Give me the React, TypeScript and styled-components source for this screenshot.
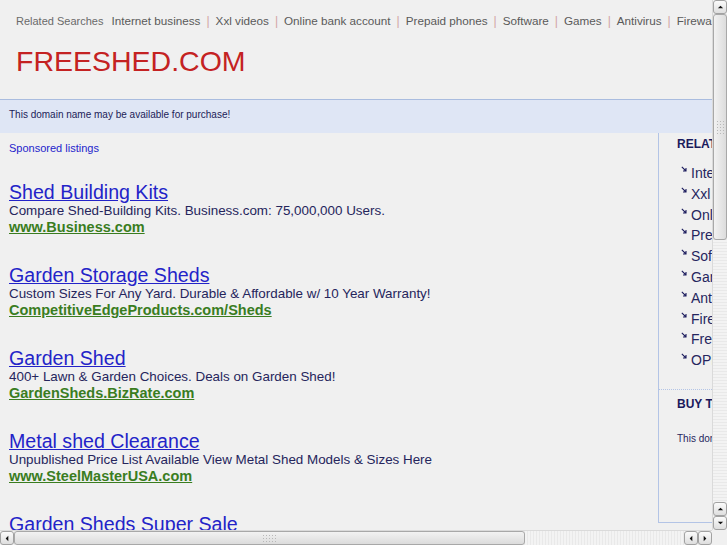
import React from "react";
import styled, { createGlobalStyle } from "styled-components";

const Global = createGlobalStyle`
  html, body { margin: 0; padding: 0; overflow: hidden; background: #f0f0f0; }
  body { font-family: "Liberation Sans", Arial, sans-serif; }
`;

const Frame = styled.div`
  width: 727px;
  height: 545px;
  display: grid;
  grid-template-columns: 712px 15px;
  grid-template-rows: 530px 15px;
  background: #f0f0f0;
`;

const Viewport = styled.div`
  overflow: hidden;
  position: relative;
`;

const Page = styled.div`
  width: 960px;
  font-family: "Liberation Sans", Arial, sans-serif;
`;

const Header = styled.div`
  padding: 14px 0 0 16px;
  height: 99px;
  box-sizing: border-box;
`;

const RelatedBar = styled.div`
  display: flex;
  align-items: baseline;
  white-space: nowrap;
  height: 14px;
  line-height: 14px;
`;

const RelatedLabel = styled.span`
  font-size: 11px;
  color: #6a6a6a;
  margin-right: 8px;
`;

const RelatedLink = styled.a`
  font-size: 11.7px;
  color: #5a5a5a;
  text-decoration: none;
`;

const Pipe = styled.span`
  font-size: 12px;
  color: #d2a4a4;
  margin: 0 6px;
`;

const Title = styled.h1`
  margin: 17px 0 0 0;
  font-size: 28.5px;
  line-height: 32px;
  font-weight: normal;
  color: #c42222;
`;

const Notice = styled.div`
  border-top: 1px solid #a9bcdf;
  background: #dfe6f5;
  height: 33px;
  line-height: 29px;
  padding-left: 9px;
  font-size: 10px;
  color: #1c1c58;
`;

const Body = styled.div`
  display: flex;
  align-items: flex-start;
`;

const Main = styled.div`
  width: 658px;
  flex-shrink: 0;
  padding: 8px 0 0 9px;
  box-sizing: border-box;
`;

const Sponsored = styled.div`
  font-size: 11px;
  line-height: 14px;
  color: #2424cc;
  margin-bottom: 26px;
`;

const Ad = styled.div`
  margin-bottom: 29px;
`;

const AdTitle = styled.a`
  display: block;
  font-size: 19.6px;
  line-height: 22px;
  color: #2323c8;
  text-decoration: underline;
  text-underline-offset: 1px;
`;

const AdDesc = styled.div`
  font-size: 13.4px;
  line-height: 16px;
  color: #25255c;
  white-space: nowrap;
`;

const AdUrl = styled.a`
  display: block;
  font-size: 14.5px;
  line-height: 16px;
  font-weight: bold;
  color: #3a7d1f;
  text-decoration: underline;
`;

const Sidebar = styled.div`
  width: 260px;
  height: 390px;
  flex-shrink: 0;
  border-left: 1px solid #b3c4e6;
  border-bottom: 1px solid #b3c4e6;
  box-sizing: border-box;
  display: flex;
  flex-direction: column;
`;

const Section = styled.div<{ $h: number; $top: number; $divider?: boolean }>`
  height: ${(p) => p.$h}px;
  box-sizing: border-box;
  padding: ${(p) => p.$top}px 0 0 18px;
  border-bottom: ${(p) => (p.$divider ? "1px dotted #b3c4e6" : "none")};
`;

const SideHeading = styled.div`
  font-size: 12px;
  line-height: 14px;
  font-weight: bold;
  color: #1a1a5c;
  white-space: nowrap;
`;

const SideList = styled.ul`
  list-style: none;
  margin: 14px 0 0 4px;
  padding: 0;
`;

const SideItem = styled.li`
  display: flex;
  align-items: flex-start;
  height: 20.8px;
  font-size: 14px;
  line-height: 16px;
  color: #26265e;
  white-space: nowrap;
`;

const ItemArrow = styled.svg`
  width: 6px;
  height: 6px;
  margin: 1px 4px 0 0;
  flex-shrink: 0;
`;

const SideText = styled.div`
  margin-top: 22px;
  font-size: 10px;
  line-height: 12px;
  color: #26265e;
  white-space: nowrap;
`;

/* ---- scrollbars ---- */
const VBar = styled.div`
  display: flex;
  flex-direction: column;
  background: repeating-linear-gradient(0deg, #f3f3f3 0 2px, #e9e9e9 2px 3px);
  border-left: 1px solid #dadada;
  box-sizing: border-box;
`;

const HBar = styled.div`
  display: flex;
  flex-direction: row;
  background: repeating-linear-gradient(90deg, #f3f3f3 0 2px, #e9e9e9 2px 3px);
  border-top: 1px solid #dadada;
  box-sizing: border-box;
`;

const Corner = styled.div`
  background: #f0f0f0;
`;

const SBtn = styled.div`
  width: 14px;
  height: 14px;
  flex-shrink: 0;
  box-sizing: border-box;
  border: 1px solid #a2a2a2;
  border-radius: 3px;
  background: linear-gradient(#fbfbfb, #dedede);
  display: flex;
  align-items: center;
  justify-content: center;
`;

const Thumb = styled.div<{ $vertical?: boolean }>`
  flex-shrink: 0;
  box-sizing: border-box;
  border: 1px solid #a8a8a8;
  border-radius: 3px;
  background: ${(p) =>
    p.$vertical
      ? "linear-gradient(90deg, #f2f2f2, #dcdcdc)"
      : "linear-gradient(#f2f2f2, #dcdcdc)"};
  display: flex;
  align-items: center;
  justify-content: center;
`;

const Grip = styled.div<{ $w: number; $h: number }>`
  width: ${(p) => p.$w}px;
  height: ${(p) => p.$h}px;
  background-image: radial-gradient(#b8b8b8 0.8px, transparent 0.9px);
  background-size: 3px 3px;
`;

const Spacer = styled.div`
  flex: 1;
`;

const Tri = ({ dir }: { dir: "up" | "down" | "left" | "right" }) => {
  const pts = {
    up: "0.5,5 4.5,1 8.5,5",
    down: "0.5,1 4.5,5 8.5,1",
    left: "5,0.5 1,4.5 5,8.5",
    right: "1,0.5 5,4.5 1,8.5",
  }[dir];
  const vb = dir === "up" || dir === "down" ? "0 0 9 6" : "0 0 6 9";
  const w = dir === "up" || dir === "down" ? 7 : 4;
  const h = dir === "up" || dir === "down" ? 4 : 7;
  return (
    <svg width={w} height={h} viewBox={vb}>
      <polygon points={pts} fill="#111" />
    </svg>
  );
};

const related = [
  "Internet business",
  "Xxl videos",
  "Online bank account",
  "Prepaid phones",
  "Software",
  "Games",
  "Antivirus",
  "Firewall",
  "Free music",
  "OPEC",
];

const ads = [
  {
    title: "Shed Building Kits",
    desc: "Compare Shed-Building Kits. Business.com: 75,000,000 Users.",
    url: "www.Business.com",
  },
  {
    title: "Garden Storage Sheds",
    desc: "Custom Sizes For Any Yard. Durable & Affordable w/ 10 Year Warranty!",
    url: "CompetitiveEdgeProducts.com/Sheds",
  },
  {
    title: "Garden Shed",
    desc: "400+ Lawn & Garden Choices. Deals on Garden Shed!",
    url: "GardenSheds.BizRate.com",
  },
  {
    title: "Metal shed Clearance",
    desc: "Unpublished Price List Available View Metal Shed Models & Sizes Here",
    url: "www.SteelMasterUSA.com",
  },
  {
    title: "Garden Sheds Super Sale",
    desc: "Huge Selection of Garden Sheds. Free Shipping on Orders Over $99!",
    url: "www.ShedsForLess.com",
  },
];

export default function App() {
  return (
    <>
      <Global />
      <Frame>
        <Viewport>
          <Page>
            <Header>
              <RelatedBar>
                <RelatedLabel>Related Searches</RelatedLabel>
                {related.slice(0, 9).map((r, i) => (
                  <React.Fragment key={r}>
                    {i > 0 && <Pipe>|</Pipe>}
                    <RelatedLink href="#">{r}</RelatedLink>
                  </React.Fragment>
                ))}
              </RelatedBar>
              <Title>FREESHED.COM</Title>
            </Header>
            <Notice>This domain name may be available for purchase!</Notice>
            <Body>
              <Main>
                <Sponsored>Sponsored listings</Sponsored>
                {ads.map((a) => (
                  <Ad key={a.title}>
                    <AdTitle href="#">{a.title}</AdTitle>
                    <AdDesc>{a.desc}</AdDesc>
                    <AdUrl href="#">{a.url}</AdUrl>
                  </Ad>
                ))}
              </Main>
              <Sidebar>
                <Section $h={257} $top={4} $divider>
                  <SideHeading>RELATED SEARCHES</SideHeading>
                  <SideList>
                    {related.map((r) => (
                      <SideItem key={r}>
                        <ItemArrow viewBox="0 0 6 6">
                          <path
                            d="M0.8 0.8 L5 5 M2 5 L5 5 L5 2"
                            stroke="#1a1a5c"
                            strokeWidth="1.1"
                            fill="none"
                          />
                        </ItemArrow>
                        {r}
                      </SideItem>
                    ))}
                  </SideList>
                </Section>
                <Section $h={132} $top={7}>
                  <SideHeading>BUY THIS DOMAIN</SideHeading>
                  <SideText>This domain may be for sale. Buy it now!</SideText>
                </Section>
              </Sidebar>
            </Body>
          </Page>
        </Viewport>
        <VBar>
          <SBtn>
            <Tri dir="up" />
          </SBtn>
          <Thumb $vertical style={{ height: 226 }}>
            <Grip $w={9} $h={14} />
          </Thumb>
          <Spacer />
          <SBtn>
            <Tri dir="up" />
          </SBtn>
          <SBtn>
            <Tri dir="down" />
          </SBtn>
        </VBar>
        <HBar>
          <SBtn>
            <Tri dir="left" />
          </SBtn>
          <Thumb style={{ width: 511 }}>
            <Grip $w={16} $h={9} />
          </Thumb>
          <Spacer />
          <SBtn>
            <Tri dir="left" />
          </SBtn>
          <SBtn>
            <Tri dir="right" />
          </SBtn>
        </HBar>
        <Corner />
      </Frame>
    </>
  );
}
